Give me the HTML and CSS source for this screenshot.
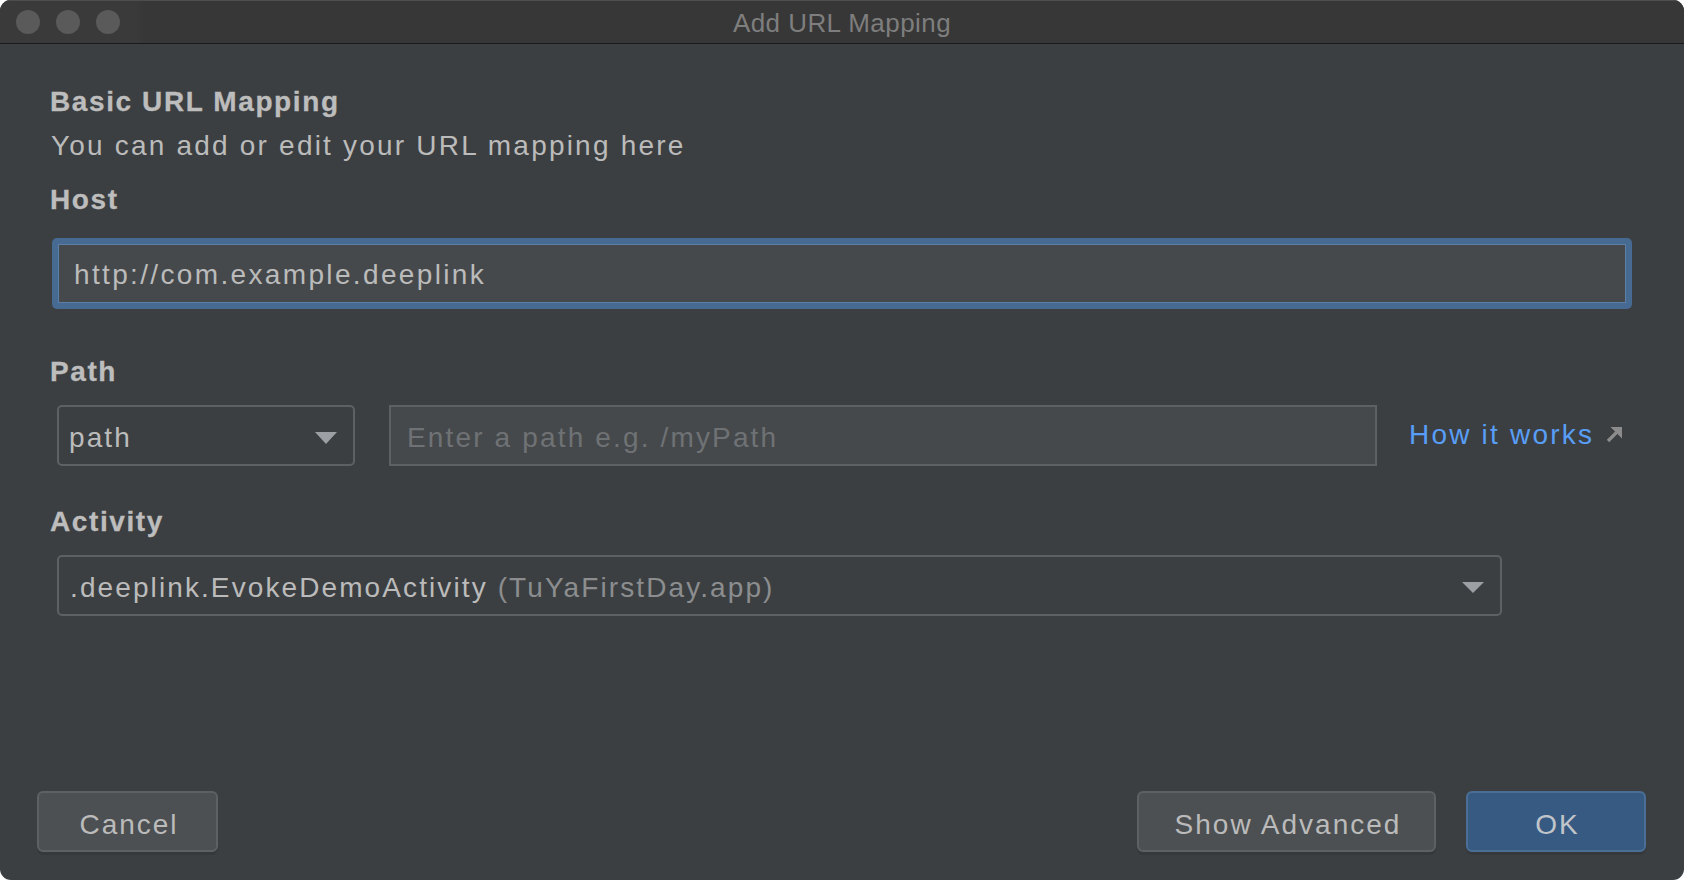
FILE: index.html
```html
<!DOCTYPE html>
<html lang="en">
<head>
<meta charset="utf-8">
<title>Add URL Mapping</title>
<link rel="stylesheet" href="styles.css">
</head>
<body>
<div class="window">
  <div class="titlebar">
    <div class="lights">
      <span class="light"></span>
      <span class="light"></span>
      <span class="light"></span>
    </div>
    <div class="title">Add URL Mapping</div>
    <div class="title-spacer"></div>
  </div>

  <div class="content">
    <div class="heading">Basic URL Mapping</div>
    <div class="subtitle">You can add or edit your URL mapping here</div>

    <div class="heading label-host">Host</div>
    <div class="ring">
      <div class="host-input">http://com.example.deeplink</div>
    </div>

    <div class="heading label-path">Path</div>
    <div class="path-row">
      <div class="combo path-combo">
        <span class="combo-text">path</span>
        <svg class="caret" width="22" height="12" viewBox="0 0 22 12"><polygon points="0,0 22,0 11,12" fill="#9c9fa3"/></svg>
      </div>
      <div class="path-input">Enter a path e.g. /myPath</div>
      <a class="link" href="#">How it works<svg class="ext" width="17" height="17" viewBox="0 0 17 17"><line x1="2" y1="15" x2="10.5" y2="6.5" stroke="#8c8c8c" stroke-width="3.2"/><polygon points="4.5,1 16,1 16,12.5" fill="#8c8c8c"/></svg></a>
    </div>

    <div class="heading label-activity">Activity</div>
    <div class="combo activity-combo">
      <span class="combo-text">.deeplink.EvokeDemoActivity <span class="muted">(TuYaFirstDay.app)</span></span>
      <svg class="caret" width="22" height="12" viewBox="0 0 22 12"><polygon points="0,0 22,0 11,11" fill="#9c9fa3"/></svg>
    </div>
  </div>

  <div class="footer">
    <button class="btn btn-cancel">Cancel</button>
    <div class="footer-spacer"></div>
    <button class="btn btn-advanced">Show Advanced</button>
    <button class="btn btn-ok">OK</button>
  </div>
</div>
</body>
</html>
```

FILE: styles.css
```css
* {
  box-sizing: border-box;
}

html, body {
  margin: 0;
  padding: 0;
  background: #ffffff;
}

body {
  width: 1684px;
  height: 880px;
  overflow: hidden;
  font-family: "Liberation Sans", Arial, sans-serif;
}

.window {
  width: 1684px;
  height: 880px;
  border-radius: 11px;
  overflow: hidden;
  background: #3c3f41;
  display: flex;
  flex-direction: column;
}

/* ---------- title bar ---------- */
.titlebar {
  height: 44px;
  flex: 0 0 44px;
  background: linear-gradient(90deg, #3a3a3a 0, #3a3a3a 135px, #373737 145px, #373737 100%);
  border-bottom: 1px solid #1a1a1a;
  box-shadow: inset 0 1px 0 #4e4e4e;
  display: grid;
  grid-template-columns: 1fr auto 1fr;
  align-items: start;
}

.lights {
  display: flex;
  gap: 16px;
  padding-left: 16px;
  padding-top: 10px;
}

.light {
  width: 24px;
  height: 24px;
  border-radius: 50%;
  background: #5a5a5a;
}

.title {
  font-size: 26px;
  line-height: 40px;
  padding-top: 3px;
  color: #7e7e7e;
  letter-spacing: 0.45px;
  white-space: nowrap;
}

/* ---------- content ---------- */
.content {
  flex: 1 1 auto;
  padding: 41px 52px 0 50px;
  display: flex;
  flex-direction: column;
  align-items: flex-start;
}

.heading {
  font-size: 28px;
  line-height: 34px;
  font-weight: bold;
  color: #bdbdbd;
  letter-spacing: 1.6px;
  -webkit-text-stroke: 0.3px #bdbdbd;
}

.subtitle {
  margin-top: 10px;
  font-size: 28px;
  line-height: 34px;
  color: #bbbbbb;
  letter-spacing: 2.2px;
  padding-left: 1px;
}

.label-host {
  margin-top: 20px;
}

.ring {
  margin-top: 21px;
  margin-left: 2px;
  align-self: stretch;
  padding: 6px;
  background: #466a91;
  border-radius: 5px;
}

.host-input {
  height: 59px;
  border: 1px solid #5b7fa7;
  background: #46494b;
  padding: 2px 0 0 15px;
  display: flex;
  align-items: center;
  font-size: 28px;
  line-height: 34px;
  color: #bbbbbb;
  letter-spacing: 2.35px;
}

.label-path {
  margin-top: 46px;
}

.path-row {
  margin-top: 16px;
  margin-left: 7px;
  display: flex;
  align-items: flex-start;
  height: 61px;
}

.combo {
  height: 61px;
  border: 2px solid #5e6163;
  border-radius: 5px;
  background: #3c3f41;
  display: flex;
  align-items: center;
  justify-content: space-between;
  padding: 5px 16px 0 10px;
  font-size: 28px;
  line-height: 34px;
  color: #bbbbbb;
  letter-spacing: 2.1px;
}

.combo .caret {
  flex: 0 0 auto;
}

.combo-text {
  white-space: nowrap;
}

.path-combo {
  width: 298px;
}

.path-input {
  margin-left: 34px;
  width: 988px;
  height: 61px;
  border: 2px solid #5e6163;
  background: #46494b;
  display: flex;
  align-items: center;
  padding: 4px 0 0 16px;
  font-size: 28px;
  line-height: 34px;
  color: #6f7275;
  letter-spacing: 2.15px;
  white-space: nowrap;
}

.link {
  margin-left: 32px;
  margin-top: 13px;
  display: flex;
  align-items: center;
  font-size: 28px;
  line-height: 34px;
  color: #589df6;
  letter-spacing: 2.2px;
  text-decoration: none;
  white-space: nowrap;
}

.link .ext {
  margin-left: 12px;
  margin-top: -2px;
}

.label-activity {
  margin-top: 39px;
}

.activity-combo {
  margin-top: 16px;
  margin-left: 7px;
  width: 1445px;
  padding-left: 11px;
  padding-top: 4px;
}

.muted {
  color: #8b8d8f;
}

/* ---------- footer ---------- */
.footer {
  display: flex;
  align-items: flex-start;
  gap: 30px;
  padding: 0 38px 28px 37px;
}

.footer-spacer {
  flex: 1 1 auto;
}

.btn {
  height: 61px;
  border: 2px solid #5d6163;
  border-radius: 6px;
  background: #4c5052;
  box-shadow: 0 3px 0 #36393b;
  color: #bbbbbb;
  font-family: "Liberation Sans", Arial, sans-serif;
  font-size: 28px;
  line-height: 34px;
  letter-spacing: 2px;
  padding: 6px 0 0 3px;
  text-align: center;
  cursor: default;
}

.btn-cancel {
  width: 181px;
}

.btn-advanced {
  width: 299px;
}

.btn-ok {
  width: 180px;
  background: #375a82;
  border-color: #4b6e96;
  color: #c1c5ca;
}
```
